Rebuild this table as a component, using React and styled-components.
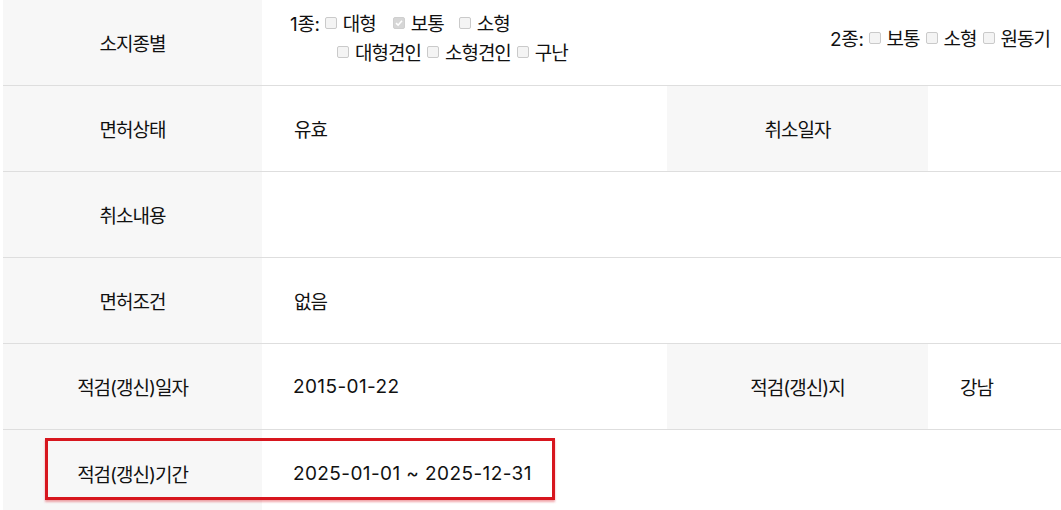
import React from 'react';
import styled, { createGlobalStyle } from 'styled-components';

const Global = createGlobalStyle`
  html, body { margin: 0; padding: 0; background: #fff; }
  body {
    font-family: Inter, "Noto Sans CJK KR", "Noto Sans", sans-serif;
    color: #111;
    overflow: hidden;
  }
`;

const Table = styled.div`
  margin-left: 3px;
  width: 1058px;
`;

const Row = styled.div`
  position: relative;
  box-sizing: border-box;
  display: grid;
  grid-template-columns: 259px 405px 261px 1fr;
  height: ${p => p.$h}px;
  border-bottom: ${p => (p.$last ? 'none' : '1px solid #dedede')};
`;

const Head = styled.div`
  background: #f7f7f7;
  display: flex;
  align-items: center;
  justify-content: center;
  font-size: 19px;
  letter-spacing: -1px;
`;

const Value = styled.div`
  grid-column: span ${p => p.$span || 1};
  display: flex;
  align-items: center;
  padding-left: ${p => (p.$num ? 31 : 32)}px;
  font-size: 19px;
  letter-spacing: ${p => (p.$num ? '0.4px' : '-1px')};
`;

const KindValue = styled.div`
  grid-column: span 3;
  display: flex;
  justify-content: space-between;
  align-items: flex-start;
  padding: 8px 11px 0 28px;
  font-size: 19px;
  letter-spacing: -1px;
`;

const KindGroup = styled.div`
  display: flex;
  flex-direction: column;
`;

const Line = styled.div`
  display: flex;
  align-items: center;
  height: 29px;
  padding-left: ${p => p.$indent || 0}px;
  margin-top: ${p => p.$top || 0}px;
`;

const Label = styled.span`
  margin-right: 5px;
  letter-spacing: -0.3px;
`;

const Item = styled.span`
  display: inline-flex;
  align-items: center;
  gap: 6px;
  margin-right: ${p => p.$mr || 0}px;
`;

const Box = styled.span`
  box-sizing: border-box;
  width: 12px;
  height: 12px;
  border: 1px solid ${p => (p.$checked ? '#cfcfcf' : '#cacaca')};
  background: ${p => (p.$checked ? '#d6d6d6' : '#f4f4f4')};
  border-radius: 2px;
  display: inline-flex;
  align-items: center;
  justify-content: center;
  margin-top: 1px;
`;

const Highlight = styled.div`
  position: absolute;
  left: 42px;
  top: 8px;
  width: 510px;
  height: 62px;
  box-sizing: border-box;
  border: 3px solid #d7161e;
  box-shadow: 0 2px 2px rgba(225, 60, 70, 0.45);
  pointer-events: none;
`;

const Check = ({ checked, label, mr }) => (
  <Item $mr={mr}>
    <Box $checked={checked}>
      {checked && (
        <svg width="8" height="8" viewBox="0 0 8 8">
          <path d="M1 4.2 L3.1 6.2 L7 1.8" fill="none" stroke="#fff" strokeWidth="1.6" />
        </svg>
      )}
    </Box>
    {label}
  </Item>
);

export default function App() {
  return (
    <>
      <Global />
      <Table>
        <Row $h={86}>
          <Head>소지종별</Head>
          <KindValue>
            <KindGroup>
              <Line>
                <Label>1종:</Label>
                <Check label="대형" mr={17} />
                <Check label="보통" checked mr={15} />
                <Check label="소형" />
              </Line>
              <Line $indent={47}>
                <Check label="대형견인" mr={6} />
                <Check label="소형견인" mr={6} />
                <Check label="구난" />
              </Line>
            </KindGroup>
            <Line $top={15}>
              <Label>2종:</Label>
              <Check label="보통" mr={6} />
              <Check label="소형" mr={6} />
              <Check label="원동기" />
            </Line>
          </KindValue>
        </Row>
        <Row $h={86}>
          <Head>면허상태</Head>
          <Value>유효</Value>
          <Head>취소일자</Head>
          <Value />
        </Row>
        <Row $h={86}>
          <Head>취소내용</Head>
          <Value $span={3} />
        </Row>
        <Row $h={86}>
          <Head>면허조건</Head>
          <Value $span={3}>없음</Value>
        </Row>
        <Row $h={86}>
          <Head>적검(갱신)일자</Head>
          <Value $num>2015-01-22</Value>
          <Head>적검(갱신)지</Head>
          <Value>강남</Value>
        </Row>
        <Row $h={86} $last>
          <Head>적검(갱신)기간</Head>
          <Value $span={3} $num>2025-01-01 ~ 2025-12-31</Value>
          <Highlight />
        </Row>
      </Table>
    </>
  );
}
